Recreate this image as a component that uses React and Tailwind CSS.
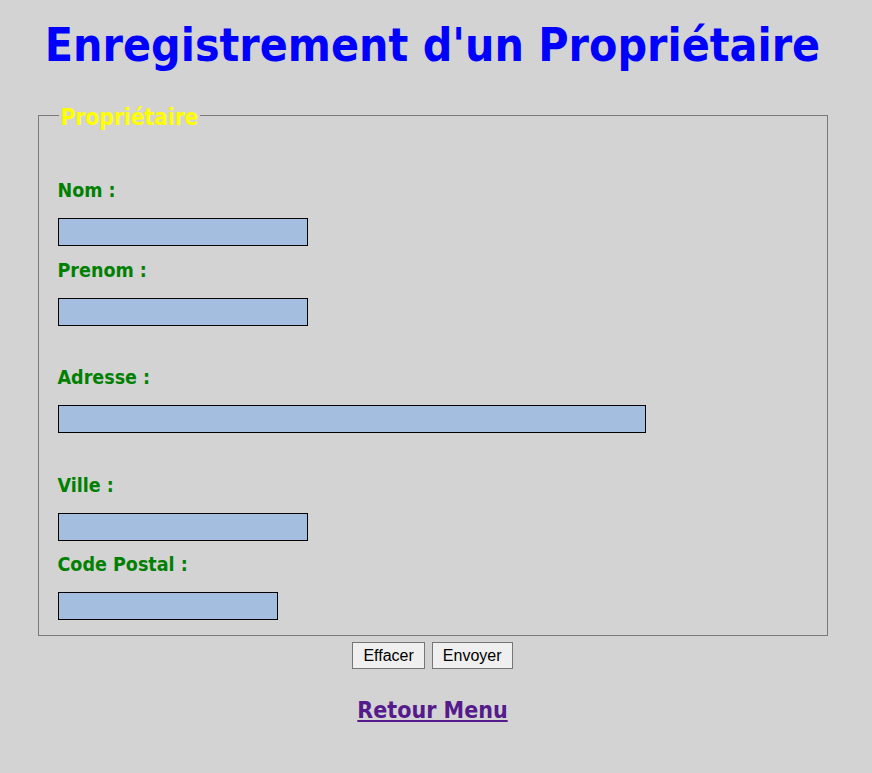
const fields = [
    { id: 'nom', label: 'Nom :', width: 'w-[250px]', gap: 'mt-[49px]' },
    { id: 'prenom', label: 'Prenom :', width: 'w-[250px]', gap: 'mt-[13px]' },
    { id: 'adresse', label: 'Adresse :', width: 'w-[588px]', gap: 'mt-[40px]' },
    { id: 'ville', label: 'Ville :', width: 'w-[250px]', gap: 'mt-[41px]' },
    { id: 'cp', label: 'Code Postal :', width: 'w-[220px]', gap: 'mt-[12px]' }
];

const App = () => {
    return (
        <div className="min-h-[773px] bg-[#d3d3d3] font-['DejaVu_Sans_Condensed','DejaVu_Sans',sans-serif]">
            <div className="w-[865px] flex flex-col items-center">
                <h1 className="mt-[16px] text-[46px] leading-[58px] font-bold text-[#0000ff]">
                    Enregistrement d'un Propriétaire
                </h1>

                <form className="flex flex-col items-center w-full">
                    <fieldset className="mt-[26px] w-[790px] border border-[#7a7a7a] pl-[19px] pr-[19px] pb-[15px]">
                        <legend className="ml-[1px] px-[2px] pt-[4px] text-[22.5px] leading-[26px] font-bold text-[#ffff00]">
                            Propriétaire
                        </legend>

                        {fields.map((f) => (
                            <div key={f.id} className={f.gap}>
                                <label htmlFor={f.id} className="block text-[19.5px] leading-[24px] font-bold text-[#008000]">
                                    {f.label}
                                </label>
                                <input
                                    id={f.id}
                                    type="text"
                                    className={`mt-[15px] block h-[28px] ${f.width} bg-[#a4bedf] border border-black outline-none`}
                                />
                            </div>
                        ))}
                    </fieldset>

                    <div className="mt-[6px] flex gap-[7px] font-['Liberation_Sans',Arial,sans-serif] text-[16px]">
                        <button type="reset" className="h-[27px] px-[10px] bg-[#efefef] border border-[#767676] text-black">
                            Effacer
                        </button>
                        <button type="button" className="h-[27px] px-[10px] bg-[#efefef] border border-[#767676] text-black">
                            Envoyer
                        </button>
                    </div>
                </form>

                <a href="#" className="mt-[27px] text-[23px] leading-[28px] font-bold text-[#551a8b] underline">
                    Retour Menu
                </a>
            </div>
        </div>
    );
};

export default App;
